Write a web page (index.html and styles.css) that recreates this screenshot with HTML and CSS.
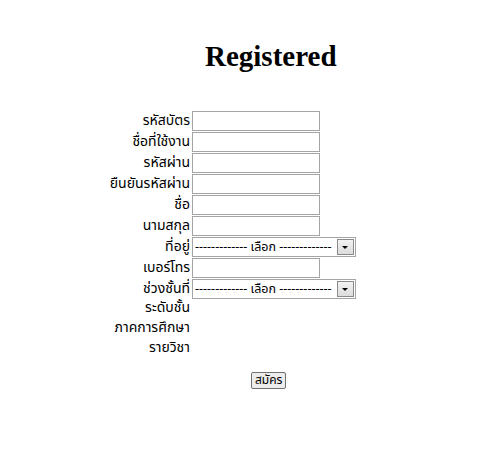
FILE: index.html
```html
<!DOCTYPE html>
<html lang="th">
<head>
    <meta charset="UTF-8">
    <title>Registered</title>
    <link rel="stylesheet" href="styles.css">
</head>
<body>

<h1 class="title">Registered</h1>

<form class="reg-form">
    <label class="lbl" for="cardId">รหัสบัตร</label>
    <input class="txt" type="text" id="cardId">

    <label class="lbl" for="user">ชื่อที่ใช้งาน</label>
    <input class="txt" type="text" id="user">

    <label class="lbl" for="pass">รหัสผ่าน</label>
    <input class="txt" type="password" id="pass">

    <label class="lbl" for="pass2">ยืนยันรหัสผ่าน</label>
    <input class="txt" type="password" id="pass2">

    <label class="lbl" for="fname">ชื่อ</label>
    <input class="txt" type="text" id="fname">

    <label class="lbl" for="lname">นามสกุล</label>
    <input class="txt" type="text" id="lname">

    <label class="lbl" for="addr">ที่อยู่</label>
    <div class="combo">
        <select id="addr">
            <option>------------- เลือก -------------</option>
        </select>
        <span class="arrow"></span>
    </div>

    <label class="lbl" for="phone">เบอร์โทร</label>
    <input class="txt" type="text" id="phone">

    <label class="lbl" for="range">ช่วงชั้นที่</label>
    <div class="combo">
        <select id="range">
            <option>------------- เลือก -------------</option>
        </select>
        <span class="arrow"></span>
    </div>

    <span class="lbl plain">ระดับชั้น</span>
    <span></span>
    <span class="lbl plain">ภาคการศึกษา</span>
    <span></span>
    <span class="lbl plain">รายวิชา</span>
    <span></span>

    <div class="actions">
        <button type="button" class="btn">สมัคร</button>
    </div>
</form>

</body>
</html>
```

FILE: styles.css
```css
body {
    margin: 0;
    font-family: Tahoma, "Noto Sans Thai", "Noto Sans", "DejaVu Sans", sans-serif;
    font-size: 14px;
    color: #000;
    background: #fff;
}

.title {
    font-family: "Liberation Serif", "Times New Roman", serif;
    font-size: 29px;
    font-weight: bold;
    margin: 40px 0 0 205px;
    line-height: 32px;
}

/* form grid */
.reg-form {
    display: grid;
    grid-template-columns: 90px auto;
    column-gap: 2px;
    row-gap: 1px;
    margin: 39px 0 0 100px;
    width: 260px;
}
.lbl {
    text-align: right;
    white-space: nowrap;
    line-height: 20px;
    height: 20px;
}
.plain {
    height: 19px;
    line-height: 15px;
}
.txt {
    width: 128px;
    height: 20px;
    box-sizing: border-box;
    border: 1px solid #a5a5a5;
    margin: 0;
    padding: 0 2px;
    font: inherit;
}

/* combo box */
.combo {
    display: flex;
    width: 164px;
    height: 20px;
    box-sizing: border-box;
    border: 1px solid #a5a5a5;
}
.combo select {
    flex: 1;
    min-width: 0;
    appearance: none;
    -webkit-appearance: none;
    border: none;
    background: #fff;
    font-family: inherit;
    font-size: 12.5px;
    padding: 0 2px;
    margin: 0;
    height: 18px;
}
.arrow {
    width: 17px;
    height: 16px;
    margin: 1px;
    box-sizing: border-box;
    border: 1px solid #8a8a8a;
    background: linear-gradient(#f2f2f2, #dcdcdc);
    position: relative;
}
.arrow::after {
    content: "";
    position: absolute;
    left: 4px;
    top: 6px;
    border-left: 3px solid transparent;
    border-right: 3px solid transparent;
    border-top: 3px solid #000;
}

.actions {
    grid-column: 1 / 3;
    padding: 9px 0 0 151px;
}
.btn {
    font: inherit;
    font-size: 12px;
    height: 17px;
    padding: 0 3px;
    line-height: 13px;
    border: 1px solid #707070;
    border-radius: 2px;
    background: #ececec;
    color: #000;
}
```
